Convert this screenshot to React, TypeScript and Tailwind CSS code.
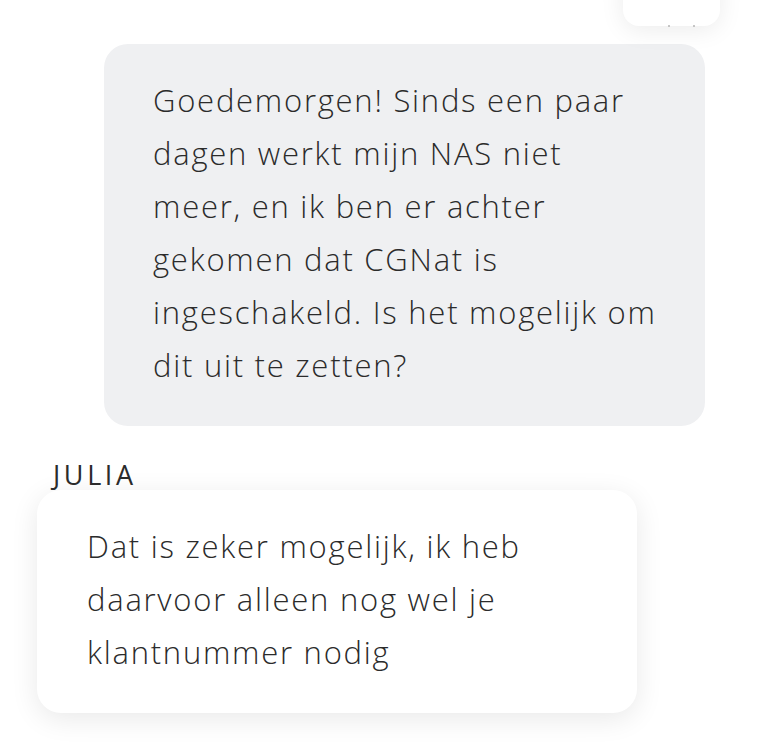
import React from "react";

export default function App() {
  const font = { fontFamily: "'Open Sans', 'Noto Sans', sans-serif" };
  return (
    <div className="relative w-[768px] h-[754px] bg-white overflow-hidden text-[#2b2b2b]" style={font}>
      <div className="flex justify-end pr-[48px]">
        <div className="relative w-[97px] h-[70px] -mt-[44px] bg-white rounded-[16px] shadow-[0_4px_24px_rgba(0,0,0,0.08)]">
          <span className="absolute left-[45px] bottom-[-1px] w-[2px] h-[2px] rounded-full bg-[#b5b5b5]" />
          <span className="absolute left-[70px] bottom-[-1px] w-[2px] h-[2px] rounded-full bg-[#b5b5b5]" />
        </div>
      </div>
      <div className="ml-[104px] mt-[18px] w-[601px] rounded-[24px] bg-[#eff0f2] pl-[49px] pr-[10px] pt-[30px] pb-[34px] text-[31px] font-light leading-[53px] tracking-[1.75px] whitespace-nowrap">
        <div>Goedemorgen! Sinds een paar</div>
        <div>dagen werkt mijn NAS niet</div>
        <div>meer, en ik ben er achter</div>
        <div>gekomen dat CGNat is</div>
        <div>ingeschakeld. Is het mogelijk om</div>
        <div>dit uit te zetten?</div>
      </div>
      <div className="ml-[53px] mt-[34px] text-[27px] leading-[30px] tracking-[3.6px]">JULIA</div>
      <div className="ml-[37px] mt-0 w-[600px] rounded-[24px] bg-white shadow-[0_6px_28px_rgba(0,0,0,0.09)] pl-[50px] pt-[30px] pb-[34px] text-[31px] font-light leading-[53px] tracking-[1.75px] whitespace-nowrap">
        <div>Dat is zeker mogelijk, ik heb</div>
        <div>daarvoor alleen nog wel je</div>
        <div>klantnummer nodig</div>
      </div>
    </div>
  );
}
